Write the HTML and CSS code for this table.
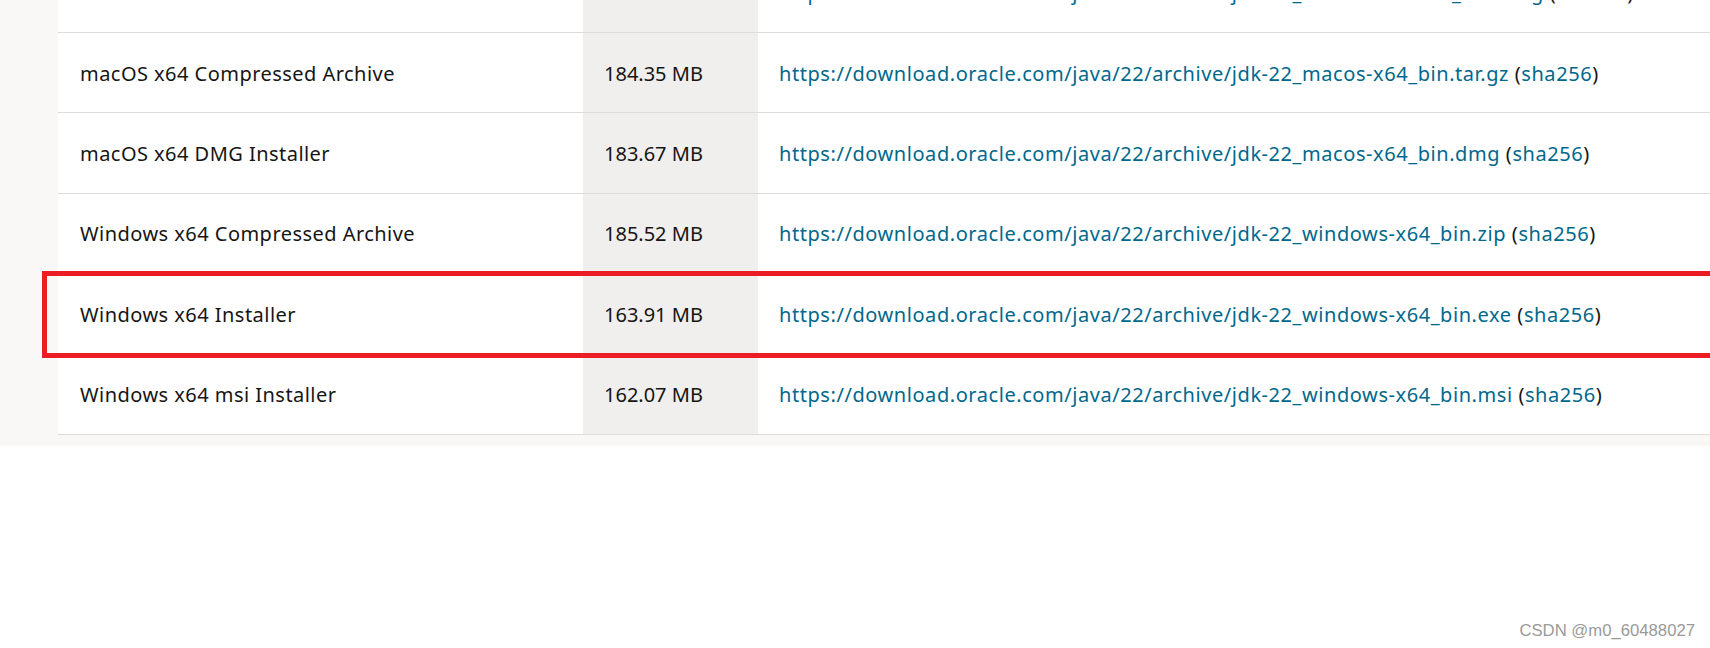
FILE: index.html
```html
<!DOCTYPE html>
<html lang="en">
<head>
<meta charset="utf-8">
<title>JDK 22 Archive Downloads</title>
<link rel="stylesheet" href="styles.css">
</head>
<body>
<div class="panel">
  <div class="table">
    <div class="row">
      <div class="cell name"><span>macOS Arm 64 DMG Installer</span></div>
      <div class="cell size"><span>182.04 MB</span></div>
      <div class="cell link"><span><a href="#">https://download.oracle.com/java/22/archive/jdk-22_macos-aarch64_bin.dmg</a> (<a href="#">sha256</a>)</span></div>
    </div>
    <div class="row">
      <div class="cell name"><span>macOS x64 Compressed Archive</span></div>
      <div class="cell size"><span>184.35 MB</span></div>
      <div class="cell link"><span><a href="#">https://download.oracle.com/java/22/archive/jdk-22_macos-x64_bin.tar.gz</a> (<a href="#">sha256</a>)</span></div>
    </div>
    <div class="row">
      <div class="cell name"><span>macOS x64 DMG Installer</span></div>
      <div class="cell size"><span>183.67 MB</span></div>
      <div class="cell link"><span><a href="#">https://download.oracle.com/java/22/archive/jdk-22_macos-x64_bin.dmg</a> (<a href="#">sha256</a>)</span></div>
    </div>
    <div class="row">
      <div class="cell name"><span>Windows x64 Compressed Archive</span></div>
      <div class="cell size"><span>185.52 MB</span></div>
      <div class="cell link"><span><a href="#">https://download.oracle.com/java/22/archive/jdk-22_windows-x64_bin.zip</a> (<a href="#">sha256</a>)</span></div>
    </div>
    <div class="row marked">
      <div class="cell name"><span>Windows x64 Installer</span></div>
      <div class="cell size"><span>163.91 MB</span></div>
      <div class="cell link"><span><a href="#">https://download.oracle.com/java/22/archive/jdk-22_windows-x64_bin.exe</a> (<a href="#">sha256</a>)</span></div>
      <div class="highlight"></div>
    </div>
    <div class="row">
      <div class="cell name"><span>Windows x64 msi Installer</span></div>
      <div class="cell size"><span>162.07 MB</span></div>
      <div class="cell link"><span><a href="#">https://download.oracle.com/java/22/archive/jdk-22_windows-x64_bin.msi</a> (<a href="#">sha256</a>)</span></div>
    </div>
  </div>
</div>
<div class="watermark">CSDN @m0_60488027</div>
</body>
</html>
```
FILE: styles.css
```css
html, body {
  margin: 0;
  padding: 0;
  background: #ffffff;
  overflow: hidden;
}
body {
  width: 1710px;
  height: 648px;
  position: relative;
  font-family: "Noto Sans", "Open Sans", sans-serif;
  color: #161513;
}
.panel {
  background: #f9f8f6;
  padding: 0 0 11px 58px;
  overflow: hidden;
}
.table {
  margin-top: -47.4px;
  background: #ffffff;
  width: 1800px;
}
.row {
  display: grid;
  grid-template-columns: 525px 175px 1fr;
  height: 80.4px;
  box-sizing: border-box;
  border-bottom: 1px solid #dddcda;
  font-size: 20px;
  position: relative;
}
.cell {
  display: flex;
  align-items: center;
  padding: 1px 0 0 22px;
  white-space: nowrap;
}
.name {
  letter-spacing: 0.46px;
}
.size {
  background: #f0efed;
  padding-left: 21px;
}
.link {
  padding-left: 21px;
  letter-spacing: 0.56px;
}
.link a {
  color: #00688c;
  text-decoration: none;
}
.highlight {
  position: absolute;
  z-index: 2;
  left: -16px;
  top: -3.2px;
  bottom: -4.1px;
  right: -200px;
  border: 5px solid #ec1c24;
  pointer-events: none;
}
.watermark {
  position: absolute;
  right: 15px;
  bottom: 7px;
  font-family: "Liberation Sans", Arial, sans-serif;
  font-size: 16.7px;
  color: #9a9a9a;
}
```
